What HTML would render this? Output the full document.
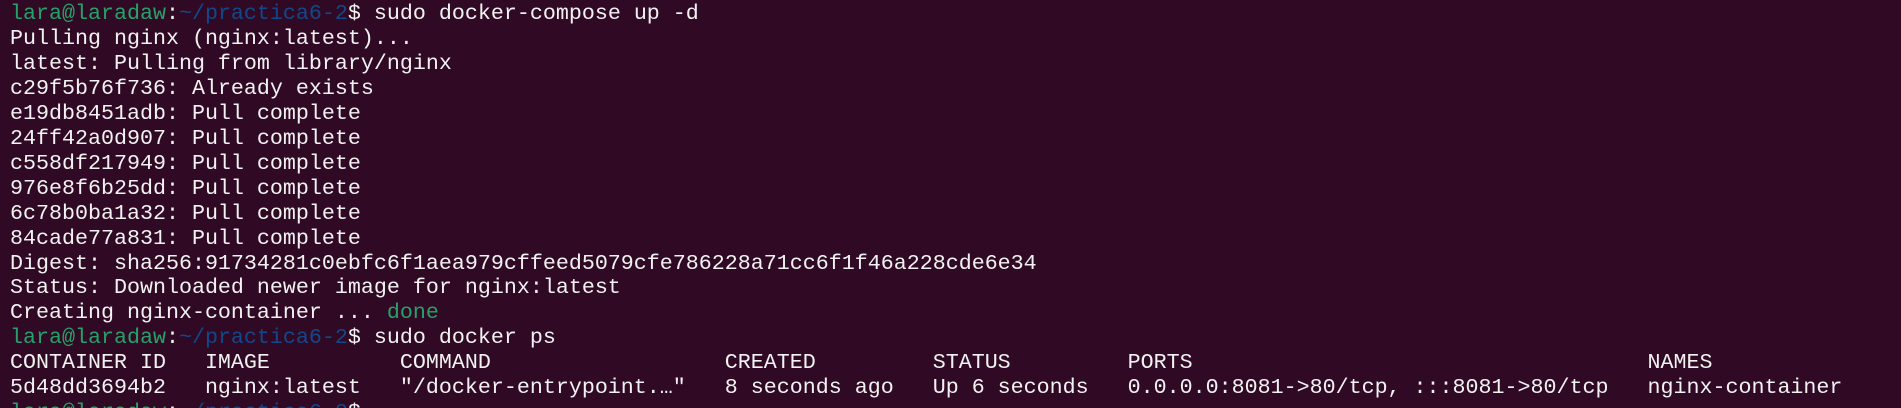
<!DOCTYPE html>
<html><head><meta charset="utf-8"><style>
html,body{margin:0;padding:0;background:#300a24;width:1901px;height:408px;overflow:hidden}
pre{margin:0;padding:2px 0 0 10px;font-family:"Liberation Mono","DejaVu Sans Mono",monospace;font-size:21.66px;line-height:24.95px;color:#f2f2f2;letter-spacing:0}
.g{color:#26a269}.b{color:#12488b}
</style></head><body><pre><span class="g">lara@laradaw</span>:<span class="b">~/practica6-2</span>$ sudo docker-compose up -d
Pulling nginx (nginx:latest)...
latest: Pulling from library/nginx
c29f5b76f736: Already exists
e19db8451adb: Pull complete
24ff42a0d907: Pull complete
c558df217949: Pull complete
976e8f6b25dd: Pull complete
6c78b0ba1a32: Pull complete
84cade77a831: Pull complete
Digest: sha256:91734281c0ebfc6f1aea979cffeed5079cfe786228a71cc6f1f46a228cde6e34
Status: Downloaded newer image for nginx:latest
Creating nginx-container ... <span class="g">done</span>
<span class="g">lara@laradaw</span>:<span class="b">~/practica6-2</span>$ sudo docker ps
CONTAINER ID   IMAGE          COMMAND                  CREATED         STATUS         PORTS                                   NAMES
5d48dd3694b2   nginx:latest   "/docker-entrypoint.…"   8 seconds ago   Up 6 seconds   0.0.0.0:8081->80/tcp, :::8081->80/tcp   nginx-container
<span class="g">lara@laradaw</span>:<span class="b">~/practica6-2</span>$</pre></body></html>
